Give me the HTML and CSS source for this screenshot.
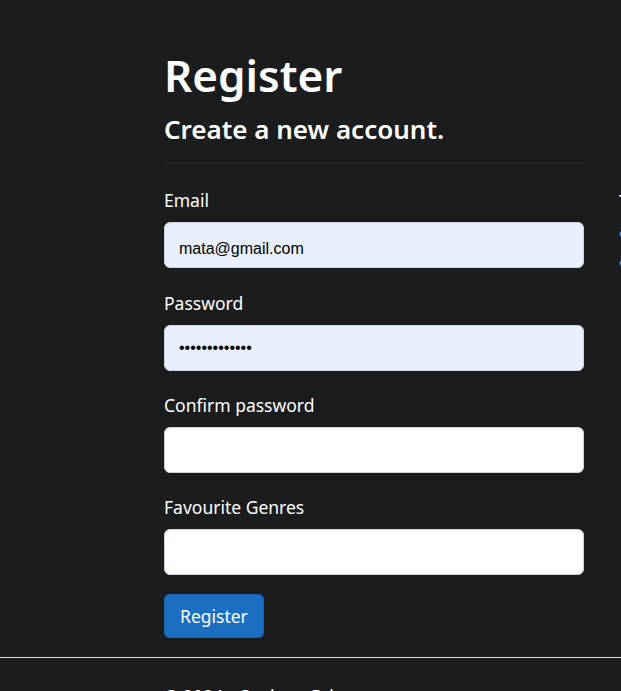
FILE: index.html
```html
<!DOCTYPE html>
<html lang="en">
<head>
<meta charset="utf-8">
<title>Register</title>
<link rel="stylesheet" href="styles.css">
</head>
<body>
<main class="page">
  <h1 class="title">Register</h1>
  <div class="row">
    <div class="col-form">
      <h2 class="subtitle">Create a new account.</h2>
      <hr class="rule">
      <form class="form">
        <div class="field field-first">
          <label class="label" for="email">Email</label>
          <input class="input input-filled input-email" id="email" type="email" value="mata@gmail.com">
        </div>
        <div class="field">
          <label class="label" for="pw">Password</label>
          <input class="input input-filled" id="pw" type="password" value="abcdefghijklm">
        </div>
        <div class="field">
          <label class="label" for="cpw">Confirm password</label>
          <input class="input" id="cpw" type="password">
        </div>
        <div class="field">
          <label class="label" for="genres">Favourite Genres</label>
          <input class="input" id="genres" type="text">
        </div>
        <button class="btn" type="button">Register</button>
      </form>
    </div>
    <section class="col-side">
      <p class="side-text">
        <span class="line">There are no external authentication services configured. See this</span>
        <span class="line"><a class="link" href="#">article about setting up this ASP.NET</a></span>
        <span class="line"><a class="link" href="#">application to support logging in via external services</a>.</span>
      </p>
    </section>
  </div>
</main>
<footer class="footer">
  <div class="footer-inner">&copy; 2024 - Cooker - <a class="footer-link" href="#">Privacy</a></div>
</footer>
</body>
</html>
```
FILE: styles.css
```css
html, body {
  overflow: hidden;
}
body {
  margin: 0;
  background: #1b1c1e;
  color: #ffffff;
  font-family: "Noto Sans", "Open Sans", sans-serif;
  font-size: 17.5px;
}
.page {
  padding: 49px 0 0 164px;
}
.title {
  margin: 0 0 12.5px;
  font-size: 44px;
  line-height: 1.2;
  font-weight: 600;
}
.row {
  display: flex;
  gap: 35px;
}
.col-form {
  width: 420px;
  flex: none;
}
.subtitle {
  margin: 0;
  font-size: 26px;
  line-height: 1.2;
  font-weight: 600;
}
.rule {
  margin: 18px 0 23px;
  border: 0;
  border-top: 1px solid rgba(255, 255, 255, 0.06);
}
.form {
  display: flex;
  flex-direction: column;
  align-items: flex-start;
}
.field {
  width: 100%;
  margin-bottom: 21px;
}
.field-first {
  margin-bottom: 22px;
}
.label {
  display: block;
  line-height: 26px;
  margin-bottom: 9px;
}
.input {
  display: block;
  box-sizing: border-box;
  width: 100%;
  height: 46px;
  padding: 0 14px;
  border: 1px solid #ced4da;
  border-radius: 6px;
  background: #ffffff;
  color: #000000;
  font-family: "Liberation Sans", Arial, sans-serif;
  font-size: 16px;
  outline: none;
}
.input-filled {
  background: #e8f0fe;
}
.input-email {
  padding-top: 7px;
}
.btn {
  margin-top: -2px;
  padding: 8px 15px;
  line-height: 26px;
  border: 1px solid #1861ac;
  border-radius: 5px;
  background: #1b6ec2;
  color: #ffffff;
  font-family: "Noto Sans", "Open Sans", sans-serif;
  font-size: 17.5px;
}
.col-side {
  flex: none;
  width: 560px;
  margin-top: 73px;
}
.side-text {
  margin: 0;
  line-height: 29px;
}
.line {
  display: block;
  white-space: nowrap;
}
.link {
  color: #3b9eff;
  text-decoration: none;
}
.footer {
  margin-top: 19px;
  border-top: 1px solid #d9dcdf;
  padding: 25px 0 0 164px;
  line-height: 26px;
}
.footer-link {
  color: #ffffff;
  text-decoration: none;
}
```
